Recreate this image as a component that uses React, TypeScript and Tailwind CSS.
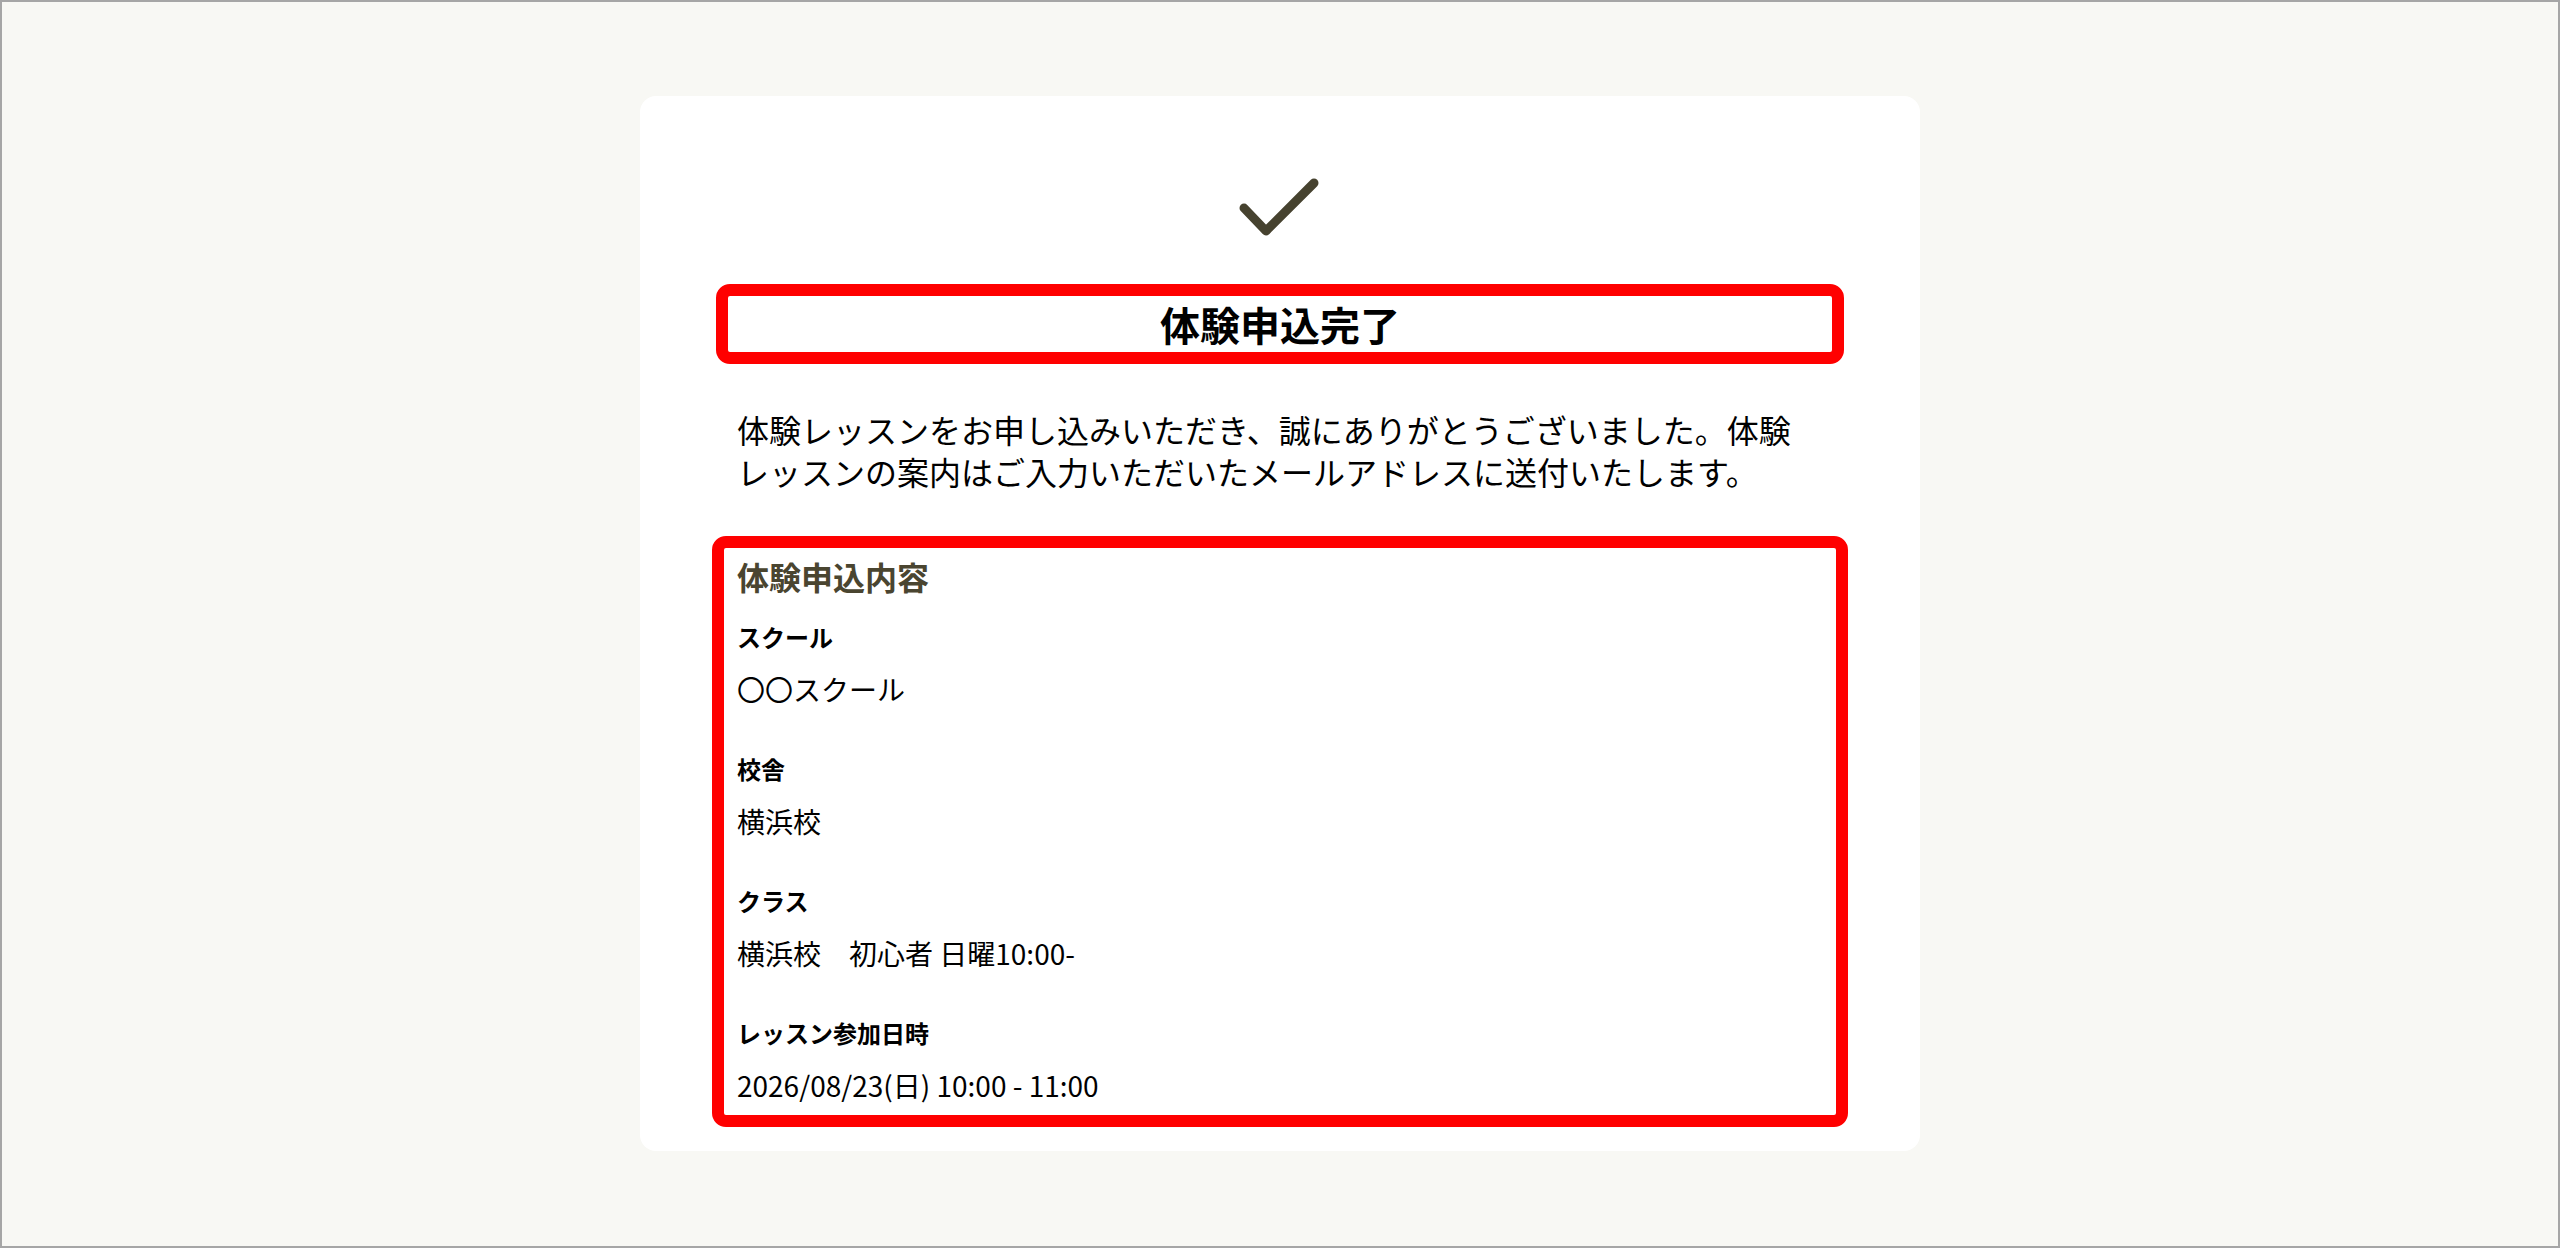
const font = { fontFamily: '"Noto Sans CJK JP", "Noto Sans", sans-serif' };

type Field = { label: string; value: string };

const fields: Field[] = [
  { label: "スクール", value: "〇〇スクール" },
  { label: "校舎", value: "横浜校" },
  { label: "クラス", value: "横浜校　初心者 日曜10:00-" },
  { label: "レッスン参加日時", value: "2026/08/23(日) 10:00 - 11:00" },
];

function CheckMark() {
  return (
    <svg width="88" height="72" viewBox="0 0 88 72" fill="none" className="mx-auto block">
      <polyline
        points="8,36 30,59 78,11"
        stroke="#46422f"
        strokeWidth="9"
        strokeLinecap="round"
        strokeLinejoin="round"
      />
    </svg>
  );
}

export default function App() {
  return (
    <div
      className="h-[1248px] border-2 border-[#a6a6a6] bg-[#f8f8f4] pt-[94px] text-black"
      style={font}
    >
      <div className="mx-auto w-[1280px] rounded-[16px] bg-white px-[72px] pt-[76px] pb-[24px]">
        <CheckMark />

        {/* title */}
        <h1 className="mx-[4px] mt-[40px] rounded-[14px] border-[12px] border-[#ff0000] text-center text-[40px] font-bold leading-[56px]">
          体験申込完了
        </h1>

        <p className="mt-[44px] pl-[25px] pr-[41px] text-[32px] leading-[42px]">
          体験レッスンをお申し込みいただき、誠にありがとうございました。体験レッスンの案内はご入力いただいたメールアドレスに送付いたします。
        </p>

        {/* application details */}
        <section className="mt-[44px] rounded-[14px] border-[12px] border-[#ff0000] px-[13px] pt-[8px] pb-[10px]">
          <h2 className="text-[32px] font-bold leading-[40px] text-[#4a4530]">体験申込内容</h2>
          <dl className="mt-[23px] flex flex-col gap-[42px]">
            {fields.map((f) => (
              <div key={f.label} className="flex flex-col gap-[14px]">
                <dt className="text-[24px] font-bold leading-[36px]">{f.label}</dt>
                <dd className="whitespace-pre text-[28px] leading-[40px]">{f.value}</dd>
              </div>
            ))}
          </dl>
        </section>
      </div>
    </div>
  );
}
